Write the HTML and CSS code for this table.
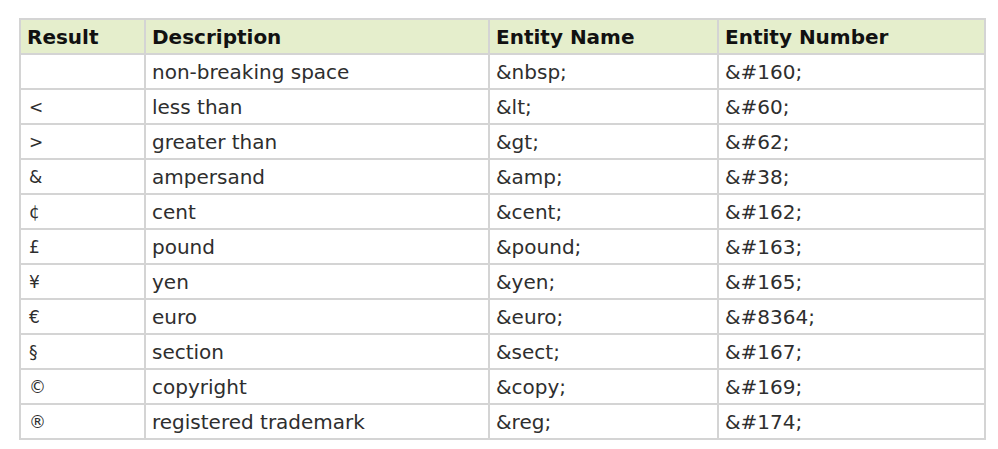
FILE: index.html
```html
<!DOCTYPE html>
<html>
<head>
<meta charset="utf-8">
<link rel="stylesheet" href="styles.css">
</head>
<body>
<table class="ref">
<thead>
<tr><th class="c1">Result</th><th class="c2">Description</th><th class="c3">Entity Name</th><th class="c4">Entity Number</th></tr>
</thead>
<tbody>
<tr><td class="sym">&nbsp;</td><td>non-breaking space</td><td>&amp;nbsp;</td><td>&amp;#160;</td></tr>
<tr><td class="sym">&lt;</td><td>less than</td><td>&amp;lt;</td><td>&amp;#60;</td></tr>
<tr><td class="sym">&gt;</td><td>greater than</td><td>&amp;gt;</td><td>&amp;#62;</td></tr>
<tr><td class="sym">&amp;</td><td>ampersand</td><td>&amp;amp;</td><td>&amp;#38;</td></tr>
<tr><td class="sym">&cent;</td><td>cent</td><td>&amp;cent;</td><td>&amp;#162;</td></tr>
<tr><td class="sym">&pound;</td><td>pound</td><td>&amp;pound;</td><td>&amp;#163;</td></tr>
<tr><td class="sym">&yen;</td><td>yen</td><td>&amp;yen;</td><td>&amp;#165;</td></tr>
<tr><td class="sym">&euro;</td><td>euro</td><td>&amp;euro;</td><td>&amp;#8364;</td></tr>
<tr><td class="sym">&sect;</td><td>section</td><td>&amp;sect;</td><td>&amp;#167;</td></tr>
<tr><td class="sym">&copy;</td><td>copyright</td><td>&amp;copy;</td><td>&amp;#169;</td></tr>
<tr><td class="sym">&reg;</td><td>registered trademark</td><td>&amp;reg;</td><td>&amp;#174;</td></tr>
</tbody>
</table>
</body>
</html>
```

FILE: styles.css
```css
html, body {
  margin: 0;
  padding: 0;
  background: #ffffff;
}
body {
  padding: 18px 0 0 19px;
  font-family: "DejaVu Sans", Verdana, sans-serif;
  color: #2e2e2e;
}
.ref {
  border-collapse: collapse;
  table-layout: fixed;
  width: 965px;
  font-size: 20px;
}
.ref th, .ref td {
  border: 2px solid #d4d4d4;
  height: 35px;
  padding: 0 0 0 6px;
  text-align: left;
  vertical-align: middle;
  box-sizing: border-box;
  white-space: nowrap;
}
.ref td.sym {
  font-size: 17px;
  padding-left: 8px;
}
.ref th {
  background: #e5eecc;
  color: #111;
  font-weight: bold;
  font-size: 20px;
}
.ref .c1 { width: 125px; }
.ref .c2 { width: 344px; }
.ref .c3 { width: 229px; }
.ref .c4 { width: 267px; }
```
